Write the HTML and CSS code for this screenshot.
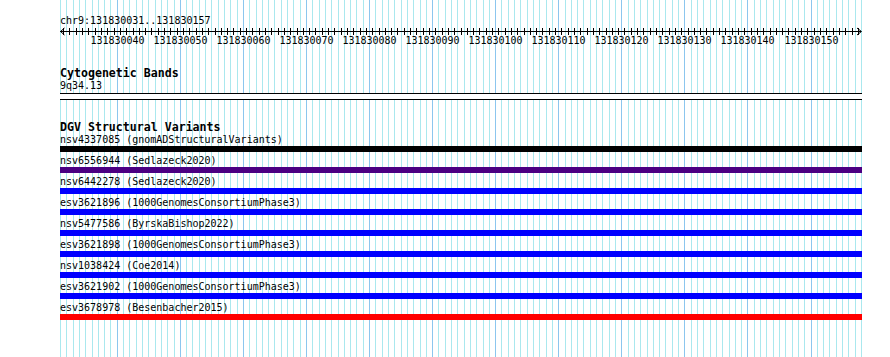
FILE: index.html
```html
<!DOCTYPE html>
<html lang="en">
<head>
    <meta charset="UTF-8">
    <meta name="viewport" content="width=device-width, initial-scale=1.0">
    <title>chr9:131830031-131830157</title>
    <link rel="stylesheet" href="styles.css">
</head>
<body>
    <div class="browser">
        <svg class="guides" id="guides" width="802" height="357"></svg>

        <div class="track">
            <div class="position">chr9:131830031..131830157</div>
            <svg class="ruler" id="ruler" width="802" height="20"></svg>
        </div>

        <div class="track">
            <div class="track-title">Cytogenetic Bands</div>
            <div class="item-label">9q34.13</div>
        </div>

        <div class="separator"></div>

        <div class="track">
            <div class="track-title">DGV Structural Variants</div>
            <div class="item-label">nsv4337085 (gnomADStructuralVariants)</div>
            <div class="bar black"></div>
            <div class="item-label">nsv6556944 (Sedlazeck2020)</div>
            <div class="bar purple"></div>
            <div class="item-label">nsv6442278 (Sedlazeck2020)</div>
            <div class="bar blue"></div>
            <div class="item-label">esv3621896 (1000GenomesConsortiumPhase3)</div>
            <div class="bar blue"></div>
            <div class="item-label">nsv5477586 (ByrskaBishop2022)</div>
            <div class="bar blue"></div>
            <div class="item-label">esv3621898 (1000GenomesConsortiumPhase3)</div>
            <div class="bar blue"></div>
            <div class="item-label">nsv1038424 (Coe2014)</div>
            <div class="bar blue"></div>
            <div class="item-label">esv3621902 (1000GenomesConsortiumPhase3)</div>
            <div class="bar blue"></div>
            <div class="item-label">esv3678978 (Besenbacher2015)</div>
            <div class="bar red"></div>
        </div>
    </div>

    <script>
        // window: chr9:131830031..131830157
        const start = 131830031;
        const bases = 127;
        const span = 801;
        const NS = 'http://www.w3.org/2000/svg';

        function line(svg, x1, y1, x2, y2, color) {
            const l = document.createElementNS(NS, 'line');
            l.setAttribute('x1', x1);
            l.setAttribute('y1', y1);
            l.setAttribute('x2', x2);
            l.setAttribute('y2', y2);
            l.setAttribute('stroke', color);
            svg.appendChild(l);
        }

        // vertical guide lines, darker every 10 bases
        const guides = document.getElementById('guides');
        for (let i = 0; i <= bases; i++) {
            const x = Math.round(i * span / bases) + 0.5;
            const dark = (start + i) % 10 === 0;
            line(guides, x, 0, x, 357, dark ? '#8cc6ee' : '#aae8ee');
        }

        // ruler: base line, arrows, ticks and labels
        const ruler = document.getElementById('ruler');
        line(ruler, 0, 5.5, span, 5.5, '#000');
        const arrows = document.createElementNS(NS, 'path');
        arrows.setAttribute('d', 'M4.5 2 L0.5 5.5 L4.5 9 M' + (span - 4) + ' 2 L' + (span + 0.5) + ' 5.5 L' + (span - 4) + ' 9');
        arrows.setAttribute('stroke', '#000');
        arrows.setAttribute('fill', 'none');
        ruler.appendChild(arrows);

        for (let i = 0; i < bases; i++) {
            const x = Math.round((i + 0.5) * span / bases) + 0.5;
            line(ruler, x, 2, x, 9, '#000');
            if ((start + i) % 10 === 0) {
                const t = document.createElementNS(NS, 'text');
                t.setAttribute('x', Math.round(i * span / bases) + 0.5);
                t.setAttribute('y', 18);
                t.setAttribute('text-anchor', 'middle');
                t.textContent = start + i;
                ruler.appendChild(t);
            }
        }
    </script>
</body>
</html>
```

FILE: styles.css
```css
body {
    margin: 0;
    background-color: #fff;
    font-family: 'DejaVu Sans Mono', 'Liberation Mono', monospace;
    font-size: 10px;
    color: #000;
    overflow: hidden;
}
.browser {
    position: relative;
    margin-left: 60px;
    width: 802px;
    height: 357px;
    padding-top: 16px;
    box-sizing: border-box;
}
.guides {
    position: absolute;
    top: 0;
    left: 0;
}
.track {
    position: relative;
}
.position {
    height: 10px;
    line-height: 10px;
}
.ruler {
    display: block;
    font-family: 'DejaVu Sans Mono', 'Liberation Mono', monospace;
    font-size: 10px;
}
.track-title {
    margin-top: 19px;
    height: 12px;
    line-height: 16px;
    font-size: 11.6px;
    font-weight: bold;
}
.item-label {
    height: 15px;
    line-height: 17px;
    white-space: nowrap;
}
.separator {
    position: relative;
    height: 5px;
    margin-top: 1px;
    background-color: #fff;
    border-top: 1px solid #000;
    border-bottom: 1px solid #000;
}
.bar {
    height: 6px;
}
.black {
    background-color: #000;
}
.purple {
    background-color: #4b0082;
}
.blue {
    background-color: #0000ff;
}
.red {
    background-color: #ff0000;
}
```
